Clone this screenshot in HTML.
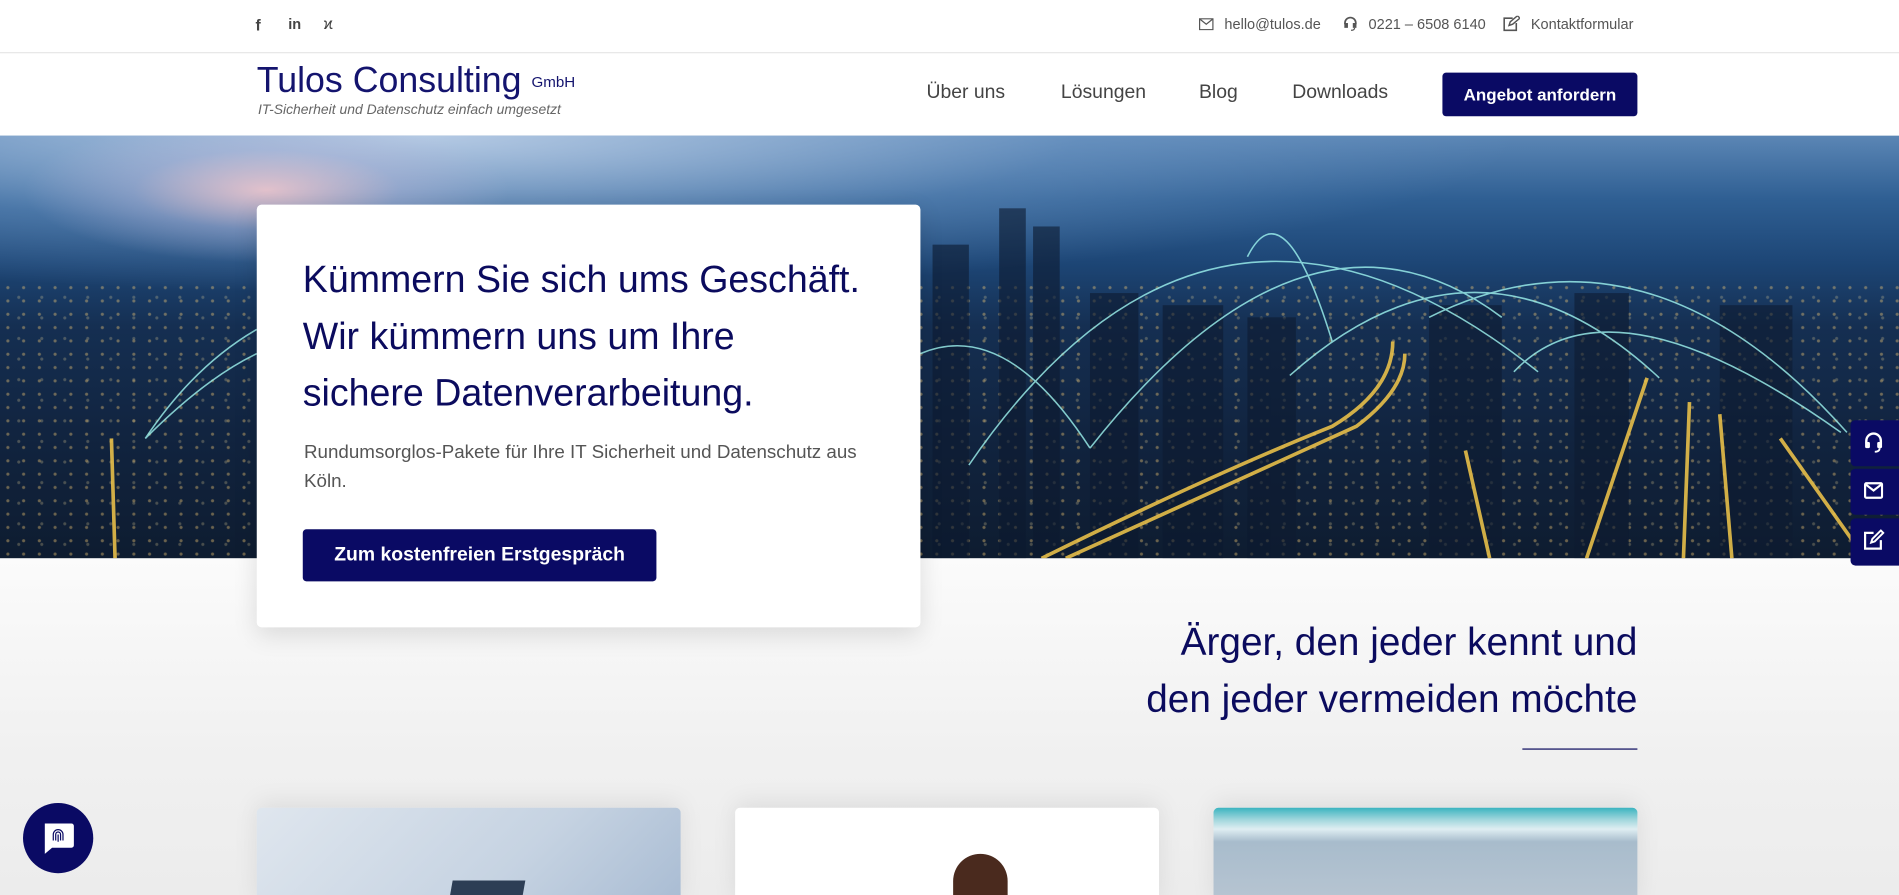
<!DOCTYPE html>
<html><head><meta charset="utf-8">
<style>
*{margin:0;padding:0;box-sizing:border-box}
html,body{width:1899px;height:895px;overflow:hidden;background:#fff}
#w{width:1568px;height:739px;transform:scale(1.21110);transform-origin:0 0;position:relative;font-family:"Liberation Sans",sans-serif;overflow:hidden;background:#fff}
.a{position:absolute}
.top{top:0;left:0;width:1568px;height:44px;border-bottom:1px solid #e6e6e6;background:#fff}
.tt{font-size:12px;color:#555;top:13px}
.nav{top:45px;left:0;width:1568px;height:67px;background:#fff}
.mi{font-size:16px;color:#444;top:68px}
.hero{top:112px;left:0;width:1568px;height:349px;background:
radial-gradient(ellipse 200px 60px at 220px 45px,rgba(245,200,205,.85),rgba(180,180,215,.4) 55%,transparent 100%),
radial-gradient(ellipse 900px 130px at 350px 0px,rgba(185,205,230,.95),rgba(120,160,205,.4) 60%,transparent 100%),
linear-gradient(180deg,#5b86b5 0%,#2f5f93 15%,#1d4676 30%,#152f52 45%,#112440 70%,#0e1c30 100%);overflow:hidden}
.lights{position:absolute;left:0;top:120px;width:1568px;height:229px;background-image:radial-gradient(circle,rgba(255,210,120,.55) 1px,transparent 1.6px),radial-gradient(circle,rgba(255,230,160,.35) 1px,transparent 1.6px);background-size:13px 11px,19px 17px;background-position:0 0,6px 5px;opacity:.7}
.below{top:461px;left:0;width:1568px;height:278px;background:linear-gradient(180deg,#fbfbfb 0%,#f0f0f0 60%,#ececec 100%)}
.card{left:212px;top:169px;width:548px;height:349px;background:#fff;border-radius:4px;box-shadow:0 6px 20px rgba(0,0,0,.12)}
h1{font-weight:normal;font-size:31px;line-height:47px;color:#0b0b5e;position:absolute;left:38px;top:38px}
.p{position:absolute;left:39px;top:193px;font-size:15.5px;line-height:24px;color:#555;width:480px}
.btn{background:#0a0a64;color:#fff;font-weight:bold;border-radius:3px;text-align:center}
.c{top:667px;width:350px;height:80px;border-radius:4px 4px 0 0;overflow:hidden;box-shadow:0 -4px 20px rgba(0,0,0,.08)}
.sb{left:1528px;width:40px;height:38px;background:#0a0a64;border-radius:4px 0 0 4px}
</style></head><body><div id="w">
<div class="a top"></div>
<div class="a" style="left:211px;top:13px;font-size:13px;color:#444;font-weight:bold">f</div>
<div class="a" style="left:238px;top:13px;font-size:12px;color:#444;font-weight:bold">in</div>
<div class="a" style="left:267px;top:12px;font-size:13px;color:#444">ϰ</div>
<svg class="a" style="left:990px;top:15px" width="12" height="10" viewBox="0 0 12 10"><rect x=".5" y=".5" width="11" height="9" fill="none" stroke="#555"/><path d="M1 1l5 4 5-4" fill="none" stroke="#555"/></svg>
<div class="a tt" style="left:1011px">hello@tulos.de</div>
<svg class="a" style="left:1109px;top:13px" width="12" height="13" viewBox="0 0 12 13"><path d="M1.5 7V6a4.5 4.5 0 0 1 9 0v1" fill="none" stroke="#555" stroke-width="1.4"/><rect x="1" y="6" width="3" height="4" fill="#555"/><rect x="8" y="6" width="3" height="4" fill="#555"/><path d="M9.5 10q0 2-3 2" fill="none" stroke="#555"/></svg>
<div class="a tt" style="left:1130px">0221 – 6508 6140</div>
<svg class="a" style="left:1241px;top:13px" width="14" height="13" viewBox="0 0 14 13"><path d="M8 2H1v10h10V6" fill="none" stroke="#555" stroke-width="1.3"/><path d="M5 8l1-3 6-5 2 2-6 5z" fill="none" stroke="#555" stroke-width="1.2"/></svg>
<div class="a tt" style="left:1264px">Kontaktformular</div>
<div class="a nav"></div>
<div class="a" style="left:212px;top:50px;font-size:29.5px;color:#14146e;white-space:nowrap">Tulos Consulting <span style="font-size:12.5px;vertical-align:4px">GmbH</span></div>
<div class="a" style="left:213px;top:85px;font-size:11.5px;color:#666;font-style:italic">IT-Sicherheit und Datenschutz einfach umgesetzt</div>
<div class="a mi" style="left:765px">Über uns</div>
<div class="a mi" style="left:876px">Lösungen</div>
<div class="a mi" style="left:990px">Blog</div>
<div class="a mi" style="left:1067px">Downloads</div>
<div class="a btn" style="left:1191px;top:60px;width:161px;height:36px;line-height:36px;font-size:14px">Angebot anfordern</div>
<div class="a hero">
<div class="lights"></div>
<svg width="1568" height="349" style="position:absolute;left:0;top:0">
<g fill="#0d1a30" opacity=".6"><rect x="770" y="90" width="30" height="260"/><rect x="825" y="60" width="22" height="290"/><rect x="853" y="75" width="22" height="275"/><rect x="900" y="130" width="40" height="220"/><rect x="960" y="140" width="50" height="210"/><rect x="1030" y="150" width="40" height="200"/><rect x="1180" y="140" width="60" height="210"/><rect x="1300" y="130" width="45" height="220"/><rect x="1420" y="140" width="60" height="210"/></g>
<g fill="none" stroke="#9ff5f0" stroke-width="1.3" opacity=".8">
<path d="M800 272Q1000 -20 1270 195"/><path d="M1065 198Q1220 60 1370 200"/><path d="M1180 150Q1360 60 1525 245"/><path d="M900 258Q1080 30 1240 150"/><path d="M760 180Q830 150 900 258"/><path d="M1250 195Q1330 110 1520 245"/><path d="M120 250Q160 190 212 160"/><path d="M120 250Q170 200 212 180"/><path d="M1030 100Q1060 40 1100 170"/></g>
<g fill="none" stroke="#f4c84a" stroke-width="3" opacity=".85"><path d="M860 349Q1000 280 1100 240Q1150 210 1150 170"/><path d="M880 349Q1010 290 1120 240Q1160 210 1160 180"/><path d="M1310 349L1360 200"/><path d="M1390 349L1395 220"/><path d="M1430 349L1420 230"/><path d="M1540 349L1470 250"/><path d="M95 349L92 250"/><path d="M1230 349L1210 260"/></g>
</svg></div>
<div class="a below"></div>
<div class="a card">
<h1>Kümmern Sie sich ums Geschäft.<br>Wir kümmern uns um Ihre<br>sichere Datenverarbeitung.</h1>
<div class="p">Rundumsorglos-Pakete für Ihre IT Sicherheit und Datenschutz aus Köln.</div>
<div class="a btn" style="left:38px;top:268px;width:292px;height:43px;line-height:43px;font-size:16px">Zum kostenfreien Erstgespräch</div>
</div>
<div class="a" style="right:216px;top:507px;text-align:right;font-size:32px;line-height:47px;color:#0b0b5e">Ärger, den jeder kennt und<br>den jeder vermeiden möchte</div>
<div class="a" style="left:1257px;top:618px;width:95px;height:1px;background:#0b0b5e"></div>
<div class="a c" style="left:212px;background:linear-gradient(135deg,#dfe6ee,#c6d3e2 60%,#a9bcd3)"><div class="a" style="left:160px;top:60px;width:60px;height:20px;background:#2d3e55;transform:skewX(-10deg)"></div></div>
<div class="a c" style="left:607px;background:#fff"><div class="a" style="left:180px;top:38px;width:45px;height:45px;border-radius:50% 50% 0 0;background:#4a2a1e"></div></div>
<div class="a c" style="left:1002px;background:linear-gradient(180deg,#3bb4c0 0%,#9fd6dc 12%,#dfeef2 22%,#a8bccc 35%,#b8c5d2 100%)"></div>
<div class="a sb" style="top:347px"></div><div class="a sb" style="top:387px"></div><div class="a sb" style="top:428px;height:39px"></div>
<svg class="a" style="left:1538px;top:356px" width="18" height="18" viewBox="0 0 18 18"><path d="M3 10V8a6 6 0 0 1 12 0v2" fill="none" stroke="#fff" stroke-width="2"/><rect x="2" y="9" width="4" height="5" rx="1" fill="#fff"/><rect x="12" y="9" width="4" height="5" rx="1" fill="#fff"/><path d="M14 14q0 3-4 3" fill="none" stroke="#fff" stroke-width="1.5"/></svg>
<svg class="a" style="left:1539px;top:398px" width="16" height="14" viewBox="0 0 16 14"><rect x="1" y="1" width="14" height="12" rx="1" fill="none" stroke="#fff" stroke-width="1.8"/><path d="M1.5 2l6.5 5 6.5-5" fill="none" stroke="#fff" stroke-width="1.8"/></svg>
<svg class="a" style="left:1538px;top:437px" width="18" height="18" viewBox="0 0 18 18"><path d="M9 3H2v13h13V9" fill="none" stroke="#fff" stroke-width="1.8"/><path d="M7 11l1-3 7-7 2 2-7 7z" fill="none" stroke="#fff" stroke-width="1.6"/></svg>
<div class="a" style="left:19px;top:663px;width:58px;height:58px;border-radius:50%;background:#0a0a64"></div>
<svg class="a" style="left:33px;top:677px" width="30" height="30" viewBox="0 0 30 30"><path d="M4 3h22a2 2 0 0 1 2 2v16a2 2 0 0 1-2 2H10l-6 5z" fill="#fff"/><g fill="none" stroke="#0a0a64" stroke-width="1"><path d="M11 17v-5a4 4 0 0 1 8 0v5"/><path d="M13 17v-5a2 2 0 0 1 4 0v5"/><path d="M15 12v6"/></g></svg>
</div></body></html>
